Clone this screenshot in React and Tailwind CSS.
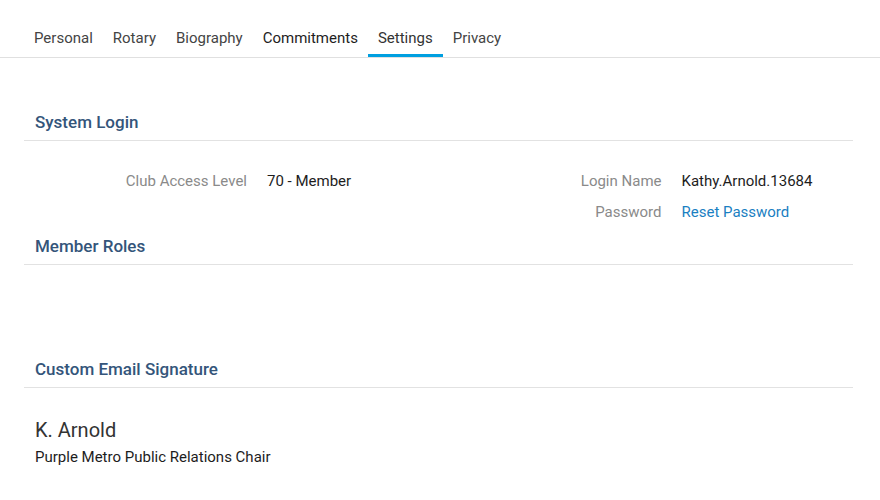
const tabs = ["Personal", "Rotary", "Biography", "Commitments", "Settings", "Privacy"];

function SectionHeading({ title }) {
  return (
    <div className="ml-6 mr-[27px] border-b border-[#e2e2e2] pl-[11px] pb-[6px]">
      <h2 className="text-[17px] leading-6 font-medium text-[#34557a]">{title}</h2>
    </div>
  );
}

function Field({ label, children }) {
  return (
    <div className="flex items-center h-5">
      <div className="w-[223px] text-right text-[#8a8a8a]">{label}</div>
      <div className="ml-5 text-[#1d1d1d]">{children}</div>
    </div>
  );
}

export default function App() {
  return (
    <div className="w-[880px] h-[500px] bg-white text-[15px] leading-5" style={{ fontFamily: "Roboto, 'Liberation Sans', sans-serif" }}>
      <nav className="pt-5 border-b border-[#e0e0e0]">
        <ul className="flex pl-6">
          {tabs.map((t) => (
            <li
              key={t}
              className={
                "px-[10px] pt-2 pb-[6px] border-b-[3px] " +
                (t === "Settings"
                  ? "border-[#009fe0] text-[#333]"
                  : t === "Commitments"
                  ? "border-transparent text-[#1e1e1e]"
                  : "border-transparent text-[#444]")
              }
            >
              {t}
            </li>
          ))}
        </ul>
      </nav>

      <div className="pt-[52px]">
        <SectionHeading title="System Login" />
        <div className="ml-6 mr-[27px] mt-[30px] grid grid-cols-2">
          <div className="flex flex-col gap-[11px]">
            <Field label="Club Access Level">70 - Member</Field>
          </div>
          <div className="flex flex-col gap-[11px]">
            <Field label="Login Name">Kathy.Arnold.13684</Field>
            <Field label="Password">
              <a className="text-[#1a80c2] cursor-pointer">Reset Password</a>
            </Field>
          </div>
        </div>

        <div className="mt-3">
          <SectionHeading title="Member Roles" />
        </div>

        <div className="mt-[92px]">
          <SectionHeading title="Custom Email Signature" />
        </div>

        <div className="ml-6 pl-[11px] mt-[28px]">
          <div className="text-[20px] leading-7 text-[#333]">K. Arnold</div>
          <div className="mt-[3px] text-[#1d1d1d]">Purple Metro Public Relations Chair</div>
        </div>
      </div>
    </div>
  );
}
